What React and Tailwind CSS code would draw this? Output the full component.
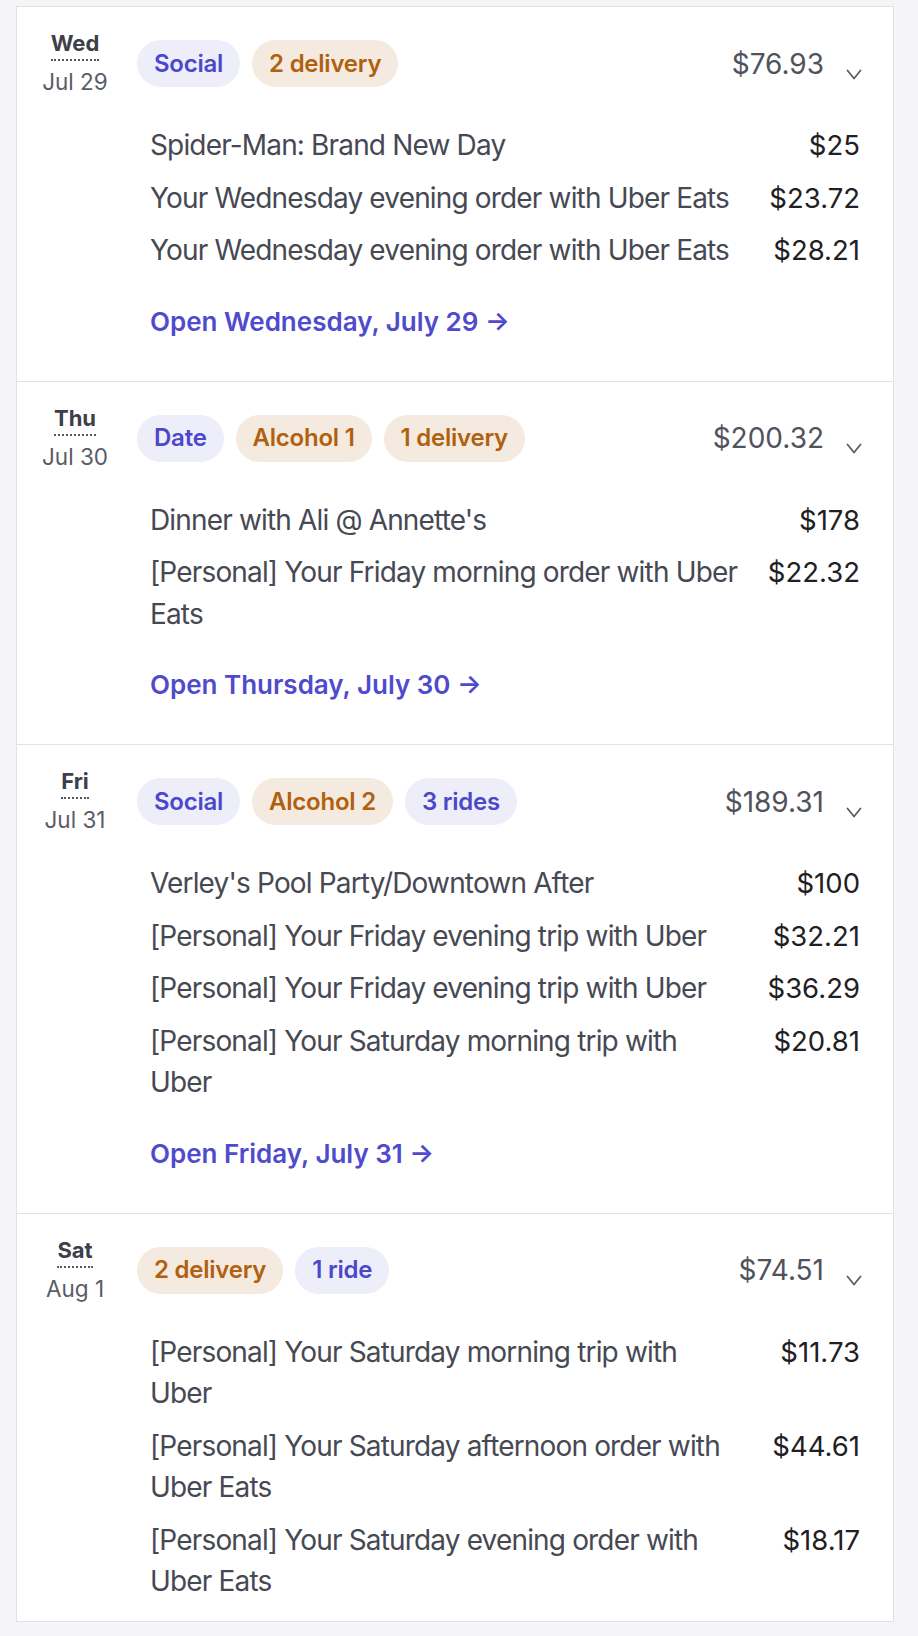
import React from 'react'

let days = [
  {
    dow: 'Wed',
    date: 'Jul 29',
    tags: [
      { label: 'Social', tone: 'blue' },
      { label: '2 delivery', tone: 'orange' },
    ],
    total: '$76.93',
    items: [
      { title: 'Spider-Man: Brand New Day', amount: '$25' },
      { title: 'Your Wednesday evening order with Uber Eats', amount: '$23.72' },
      { title: 'Your Wednesday evening order with Uber Eats', amount: '$28.21' },
    ],
    link: 'Open Wednesday, July 29',
  },
  {
    dow: 'Thu',
    date: 'Jul 30',
    tags: [
      { label: 'Date', tone: 'blue' },
      { label: 'Alcohol 1', tone: 'orange' },
      { label: '1 delivery', tone: 'orange' },
    ],
    total: '$200.32',
    items: [
      { title: "Dinner with Ali @ Annette's", amount: '$178' },
      { title: '[Personal] Your Friday morning order with Uber Eats', amount: '$22.32' },
    ],
    link: 'Open Thursday, July 30',
  },
  {
    dow: 'Fri',
    date: 'Jul 31',
    tags: [
      { label: 'Social', tone: 'blue' },
      { label: 'Alcohol 2', tone: 'orange' },
      { label: '3 rides', tone: 'blue' },
    ],
    total: '$189.31',
    items: [
      { title: "Verley's Pool Party/Downtown After", amount: '$100' },
      { title: '[Personal] Your Friday evening trip with Uber', amount: '$32.21' },
      { title: '[Personal] Your Friday evening trip with Uber', amount: '$36.29' },
      { title: '[Personal] Your Saturday morning trip with Uber', amount: '$20.81' },
    ],
    link: 'Open Friday, July 31',
  },
  {
    dow: 'Sat',
    date: 'Aug 1',
    tags: [
      { label: '2 delivery', tone: 'orange' },
      { label: '1 ride', tone: 'blue' },
    ],
    total: '$74.51',
    items: [
      { title: '[Personal] Your Saturday morning trip with Uber', amount: '$11.73' },
      { title: '[Personal] Your Saturday afternoon order with Uber Eats', amount: '$44.61' },
      { title: '[Personal] Your Saturday evening order with Uber Eats', amount: '$18.17' },
    ],
    link: null,
  },
]

function Tag({ label, tone }) {
  let colors = tone === 'blue' ? 'bg-[#eeeefb] text-[#4b48c9]' : 'bg-[#f4eae0] text-[#b0600e]'
  return (
    <span className={`h-[47px] px-[17px] rounded-full flex items-center text-[24px] tracking-[-0.01em] font-semibold ${colors}`}>
      {label}
    </span>
  )
}

function Chevron() {
  return (
    <svg width="16" height="12" viewBox="0 0 16 12" fill="none" className="mt-[22px]">
      <path d="M1.5 1.5 L8 9.5 L14.5 1.5" stroke="#5b5e66" strokeWidth="1.8" strokeLinecap="round" strokeLinejoin="round" />
    </svg>
  )
}

function DaySection({ day }) {
  return (
    <div className="flex border-b border-[#e1e1e7] pl-4 pr-[31px] pt-[20px] pb-[18px]">
      <div className="w-[84px] shrink-0 flex flex-col items-center">
        <span className="text-[22px] leading-[32px] font-bold text-[#3d4049] border-b-2 border-dotted border-[#55585f]">
          {day.dow}
        </span>
        <span className="mt-[5px] text-[22.5px] leading-[32px] text-[#5a5d66]">{day.date}</span>
      </div>
      <div className="flex-1 ml-[20px]">
        <div className="mt-[13px] flex items-center">
          <div className="flex gap-3">
            {day.tags.map(function (t, i) {
              return <Tag key={i} label={t.label} tone={t.tone} />
            })}
          </div>
          <span className="ml-auto text-[28px] text-[#50535c]">{day.total}</span>
          <span className="ml-[22px]"><Chevron /></span>
        </div>
        <div className="mt-[38px] pl-[13px] flex flex-col gap-[11px]">
          {day.items.map(function (item, i) {
            return (
              <div key={i} className="flex leading-[41.5px]">
                <span className="flex-1 text-[28px] tracking-[-0.03em] text-[#464953]">{item.title}</span>
                <span className="w-[120px] shrink-0 text-right text-[27.5px] text-[#1f2024] pr-[2px]">{item.amount}</span>
              </div>
            )
          })}
        </div>
        {day.link && (
          <div className="mt-[32px] mb-[23px] pl-[13px] text-[26px] leading-[36px] font-semibold text-[#4f4bcc]">
            {day.link} <span>→</span>
          </div>
        )}
      </div>
    </div>
  )
}

export default function App() {
  return (
    <div className="min-h-[1636px] bg-[#f5f5f8] pt-[6px] pl-4 pr-[24px]" style={{ fontFamily: 'Inter, "Noto Sans", sans-serif' }}>
      <div className="bg-white border border-[#e1e1e7] border-b-0">
        {days.map(function (d) {
          return <DaySection key={d.dow} day={d} />
        })}
      </div>
    </div>
  )
}
